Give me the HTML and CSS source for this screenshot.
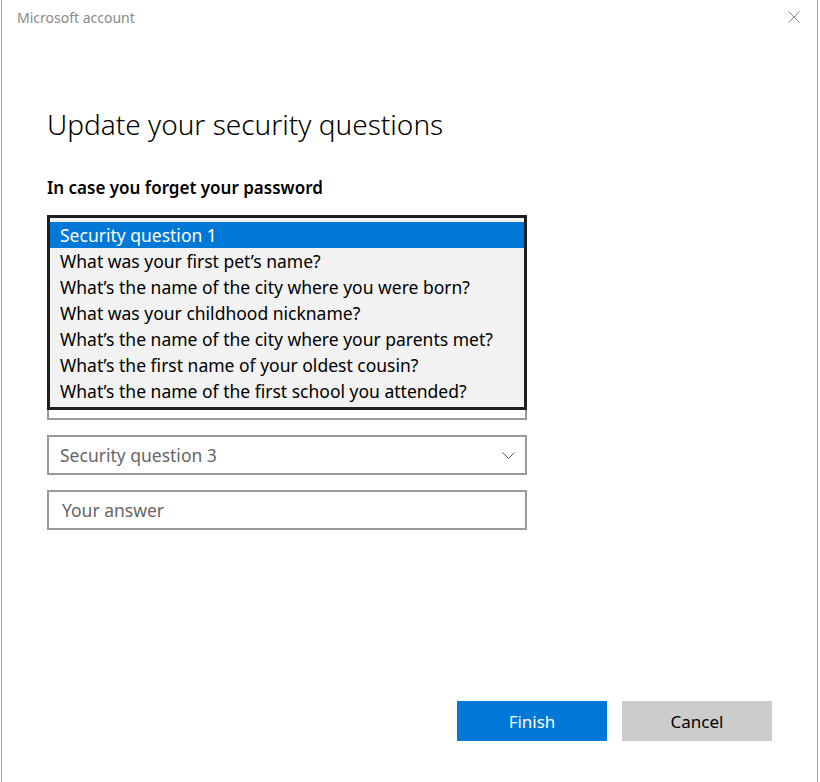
FILE: index.html
```html
<!DOCTYPE html>
<html lang="en">
<head>
    <meta charset="UTF-8">
    <meta name="viewport" content="width=device-width, initial-scale=1.0">
    <title>Microsoft account</title>
    <link rel="stylesheet" href="styles.css">
</head>
<body>
    <div class="window">
        <div class="titlebar">
            <span class="app-title">Microsoft account</span>
            <button class="close-btn" aria-label="Close">
                <svg width="12" height="12" viewBox="0 0 12 12">
                    <path d="M0.5 0.5 L11.5 11.5 M11.5 0.5 L0.5 11.5" stroke="#8a8a8a" stroke-width="1" fill="none"/>
                </svg>
            </button>
        </div>

        <main class="content">
            <h1>Update your security questions</h1>
            <h2>In case you forget your password</h2>

            <div class="fields">
                <!-- covered by the open dropdown -->
                <div class="select"></div>
                <div class="answer"></div>
                <div class="select"></div>
                <div class="answer"></div>

                <div class="select">
                    <span>Security question 3</span>
                    <svg class="chevron" width="13" height="7" viewBox="0 0 13 7"><path d="M0.5 0.5 L6.5 6.5 L12.5 0.5" stroke="#555" fill="none"/></svg>
                </div>
                <div class="answer">Your answer</div>

                <ul class="dropdown">
                    <li class="selected">Security question 1</li>
                    <li>What was your first pet’s name?</li>
                    <li>What’s the name of the city where you were born?</li>
                    <li>What was your childhood nickname?</li>
                    <li>What’s the name of the city where your parents met?</li>
                    <li>What’s the first name of your oldest cousin?</li>
                    <li>What’s the name of the first school you attended?</li>
                </ul>
            </div>

            <div class="actions">
                <button class="btn btn-primary">Finish</button>
                <button class="btn">Cancel</button>
            </div>
        </main>
    </div>
</body>
</html>
```

FILE: styles.css
```css
html, body {
    margin: 0;
    padding: 0;
    background-color: white;
}

body {
    font-family: "Noto Sans", "Open Sans", sans-serif;
    color: #000;
}

.window {
    margin-left: 1px;
    width: 815px;
    height: 782px;
    border-left: 1px solid #a8a8a8;
    border-right: 1px solid #a8a8a8;
    display: flex;
    flex-direction: column;
}

.titlebar {
    height: 34px;
    display: flex;
    align-items: center;
    justify-content: space-between;
    padding-left: 15px;
}

.app-title {
    font-size: 14px;
    color: #8a8a8a;
}

.close-btn {
    border: none;
    background: none;
    width: 46px;
    height: 32px;
    padding: 0;
    display: flex;
    align-items: center;
    justify-content: center;
}

.content {
    flex: 1;
    display: flex;
    flex-direction: column;
    padding: 0 45px 41px 45px;
}

h1 {
    font-size: 28px;
    font-weight: 300;
    line-height: 36px;
    margin: 72px 0 0 0;
}

h2 {
    font-size: 17px;
    font-weight: 600;
    line-height: 22px;
    margin: 35px 0 0 0;
}

.fields {
    position: relative;
    width: 480px;
    margin-top: 16px;
    display: flex;
    flex-direction: column;
    gap: 15px;
}

.select, .answer {
    height: 40px;
    box-sizing: border-box;
    border: 2px solid #999;
    display: flex;
    align-items: center;
    font-size: 17.5px;
    color: #666;
}

.select {
    justify-content: space-between;
    padding: 0 10px 0 11px;
}

.answer {
    padding-left: 13px;
}

.dropdown {
    position: absolute;
    top: 0;
    left: 0;
    width: 480px;
    box-sizing: border-box;
    margin: 0;
    padding: 4px 0 3px 0;
    list-style: none;
    border: 3px solid #1f1f1f;
    background-color: #f2f2f2;
}

.dropdown li {
    height: 26px;
    line-height: 26px;
    padding-left: 10px;
    font-size: 17.5px;
    white-space: nowrap;
}

.dropdown li.selected {
    background-color: #0078d7;
    color: white;
}

.actions {
    margin-top: auto;
    display: flex;
    justify-content: flex-end;
    gap: 15px;
}

.btn {
    width: 150px;
    height: 40px;
    border: none;
    font-family: inherit;
    font-size: 17px;
    background-color: #ccc;
    color: #000;
}

.btn-primary {
    background-color: #0078d7;
    color: white;
}
```
